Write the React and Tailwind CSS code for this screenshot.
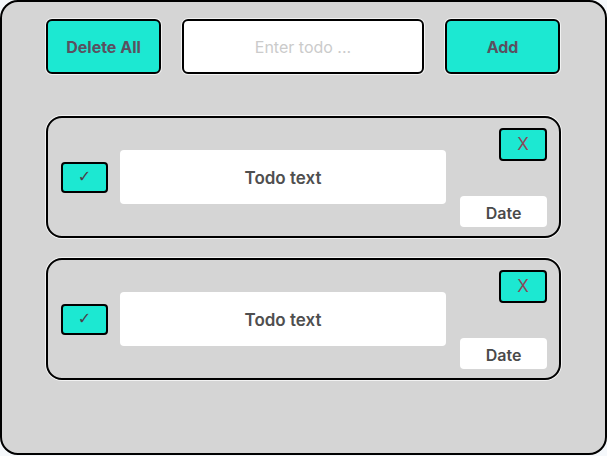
export default function App() {
  const font = { fontFamily: "Inter, 'Open Sans', sans-serif" };
  const Card = () => (
    <div className="h-[122px] rounded-[16px] border-2 border-black flex items-center pl-[13px] pr-[11px] shadow-[0_0_0_1px_#f2f2f2]">
      <div className="w-[47px] h-[31px] bg-[#1ce8d2] border-2 border-black rounded-[4px] flex items-center justify-center text-[#4a3f4a] text-[16px] font-['DejaVu_Sans',sans-serif]">✓</div>
      <div className="ml-[12px] w-[326px] h-[54px] bg-white rounded-[4px] flex items-center justify-center pt-[3px] text-[17px] font-semibold text-[#4f4f4f]">Todo text</div>
      <div className="ml-[13px] w-[88px] h-full flex flex-col items-end justify-between pt-[10px] pb-[9px]">
        <div className="w-[48px] h-[33px] bg-[#1ce8d2] border-2 border-black rounded-[4px] flex items-center justify-center text-[17px] text-[#8a4a5a]">X</div>
        <div className="w-[87px] h-[31px] bg-white rounded-[4px] flex items-center justify-center pt-[2px] text-[16px] font-semibold text-[#4a4a4a]">Date</div>
      </div>
    </div>
  );
  return (
    <div className="w-[607px] h-[456px] bg-[#f5f8fb]" style={font}>
      <div className="w-[607px] h-[455px] bg-[#d5d5d5] border-2 border-black rounded-[18px] px-[44px] pt-[17px]">
        <div className="flex gap-[21px]">
          <div className="w-[115px] h-[55px] bg-[#1ce8d2] border-2 border-black rounded-[6px] flex items-center justify-center text-[16px] font-bold text-[#5a5060] shadow-[0_0_0_1px_#f2f2f2]">Delete All</div>
          <div className="w-[242px] h-[55px] bg-white border-2 border-black rounded-[6px] flex items-center justify-center text-[16px] text-[#cbcbcb] shadow-[0_0_0_1px_#f2f2f2]">Enter todo ...</div>
          <div className="w-[115px] h-[55px] bg-[#1ce8d2] border-2 border-black rounded-[6px] flex items-center justify-center text-[16px] font-bold text-[#5a5060] shadow-[0_0_0_1px_#f2f2f2]">Add</div>
        </div>
        <div className="mt-[42px] flex flex-col gap-[20px]">
          <Card />
          <Card />
        </div>
      </div>
    </div>
  );
}
